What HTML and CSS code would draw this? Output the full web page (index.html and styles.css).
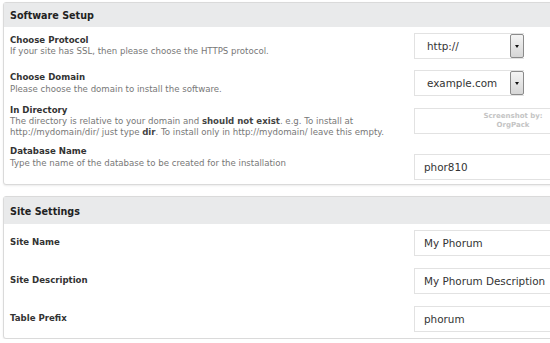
FILE: index.html
```html
<!DOCTYPE html>
<html lang="en">
<head>
    <meta charset="UTF-8">
    <meta name="viewport" content="width=device-width, initial-scale=1.0">
    <title>Software Setup</title>
    <link rel="stylesheet" href="styles.css">
</head>
<body>
    <div class="page">
        <div class="panel panel-setup">
            <div class="panel-head">Software Setup</div>
            <div class="row row-protocol">
                <div class="label">
                    <span class="label-title">Choose Protocol</span>
                    <span class="desc">If your site has SSL, then please choose the HTTPS protocol.</span>
                </div>
                <div class="field">
                    <div class="select">
                        <span class="select-value">http://</span>
                        <span class="select-btn"></span>
                    </div>
                </div>
            </div>
            <div class="row">
                <div class="label">
                    <span class="label-title">Choose Domain</span>
                    <span class="desc">Please choose the domain to install the software.</span>
                </div>
                <div class="field">
                    <div class="select">
                        <span class="select-value">example.com</span>
                        <span class="select-btn"></span>
                    </div>
                </div>
            </div>
            <div class="row">
                <div class="label">
                    <span class="label-title">In Directory</span>
                    <span class="desc">The directory is relative to your domain and <b>should not exist</b>. e.g. To install at http://mydomain/dir/ just type <b>dir</b>. To install only in http://mydomain/ leave this empty.</span>
                </div>
                <div class="field">
                    <input type="text" value="">
                    <div class="watermark">Screenshot by:<br>OrgPack</div>
                </div>
            </div>
            <div class="row row-last">
                <div class="label">
                    <span class="label-title">Database Name</span>
                    <span class="desc">Type the name of the database to be created for the installation</span>
                </div>
                <div class="field">
                    <input type="text" value="phor810">
                </div>
            </div>
        </div>

        <div class="panel panel-site">
            <div class="panel-head">Site Settings</div>
            <div class="row">
                <div class="label"><span class="label-title">Site Name</span></div>
                <div class="field"><input type="text" value="My Phorum"></div>
            </div>
            <div class="row">
                <div class="label"><span class="label-title">Site Description</span></div>
                <div class="field"><input type="text" value="My Phorum Description"></div>
            </div>
            <div class="row">
                <div class="label"><span class="label-title">Table Prefix</span></div>
                <div class="field"><input type="text" value="phorum"></div>
            </div>
        </div>
    </div>
</body>
</html>
```

FILE: styles.css
```css
html, body {
    margin: 0;
    padding: 0;
    background-color: #fff;
    font-family: "DejaVu Sans", Verdana, sans-serif;
    overflow: hidden;
}

.page {
    padding: 2px 0 0 3px;
    width: 640px;
}

.panel {
    width: 620px;
    border: 1px solid #dadada;
    border-radius: 3px;
    box-shadow: 0 1px 2px rgba(0,0,0,0.08);
    background-color: #fff;
}

.panel + .panel {
    margin-top: 11px;
}

.panel-head {
    background-color: #e9eaeb;
    height: 24px;
    line-height: 26px;
    padding-left: 6px;
    font-size: 9.6px;
    font-weight: bold;
    color: #222;
}

.panel-site .panel-head {
    height: 27px;
    line-height: 30px;
}

.row {
    display: flex;
    align-items: center;
    height: 38px;
    padding-left: 6px;
}

.row-protocol {
    height: 37px;
}

.row-last {
    height: 44px;
}

.row-last .label {
    margin-bottom: 10px;
}

.row-last .field {
    margin-top: 10px;
}

.label {
    flex: 0 0 404px;
    font-size: 8.6px;
    line-height: 10.5px;
}

.label-title {
    display: block;
    margin-bottom: 1px;
    font-size: 8.6px;
    font-weight: bold;
    color: #333;
}

.desc {
    display: block;
    padding-right: 6px;
    color: #777;
}

.desc b {
    color: #444;
}

.field {
    position: relative;
}

input[type="text"] {
    box-sizing: border-box;
    width: 200px;
    height: 26px;
    padding: 0 9px;
    border: 1px solid #e2e2e2;
    font-family: "DejaVu Sans", Verdana, sans-serif;
    font-size: 10.4px;
    color: #333;
    background-color: #fff;
    outline: none;
}

.select {
    box-sizing: border-box;
    display: flex;
    align-items: center;
    justify-content: space-between;
    width: 110px;
    height: 26px;
    border: 1px solid #e2e2e2;
    border-right: none;
    font-size: 10.4px;
    color: #333;
}

.select-value {
    padding-left: 12px;
}

.select-btn {
    position: relative;
    box-sizing: border-box;
    width: 14px;
    height: 24px;
    border: 1px solid #8a8a8a;
    border-radius: 2px;
    background: linear-gradient(to bottom, #f4f4f4, #d6d6d6);
}

.select-btn::after {
    content: "";
    position: absolute;
    left: 4px;
    top: 10px;
    border-left: 2px solid transparent;
    border-right: 2px solid transparent;
    border-top: 3px solid #111;
}

.watermark {
    position: absolute;
    left: 68px;
    top: 4px;
    width: 62px;
    text-align: center;
    font-size: 7px;
    line-height: 9px;
    font-weight: bold;
    color: #c4c4c4;
}
```
